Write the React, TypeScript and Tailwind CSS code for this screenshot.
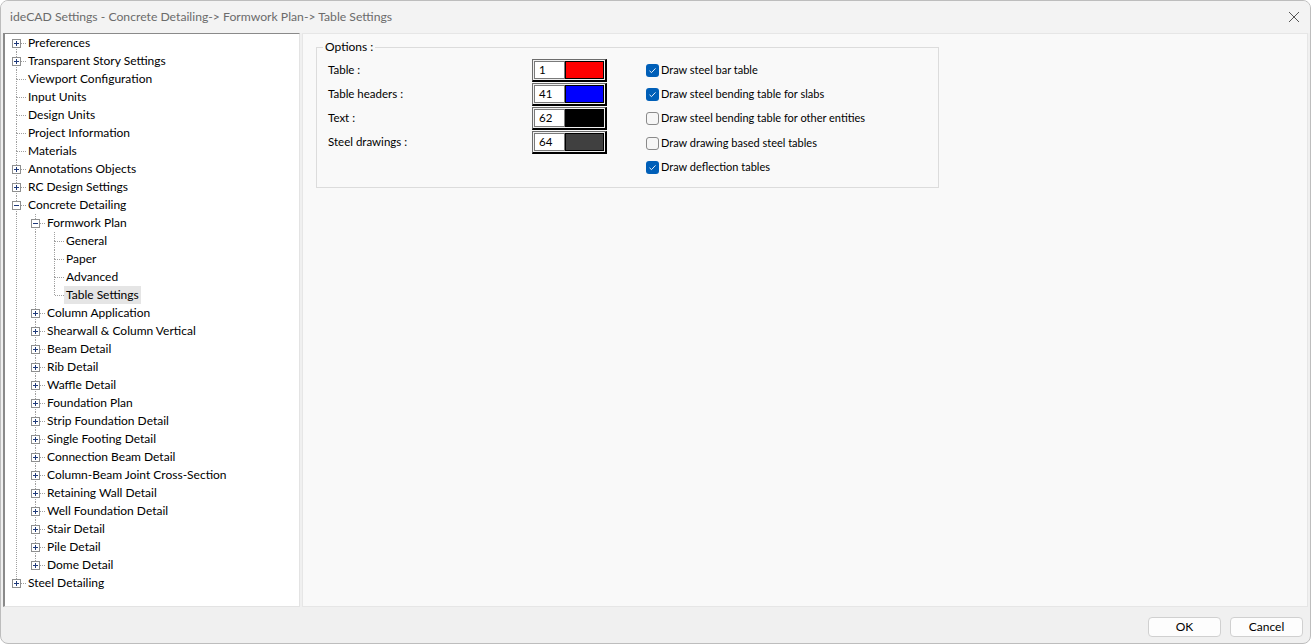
import React from "react";

type Node = { label: string; open?: boolean; selected?: boolean; kids?: Node[]; leaf?: boolean };

const concrete: Node[] = [
  {
    label: "Formwork Plan",
    open: true,
    kids: [
      { label: "General", leaf: true },
      { label: "Paper", leaf: true },
      { label: "Advanced", leaf: true },
      { label: "Table Settings", leaf: true, selected: true },
    ],
  },
  ...[
    "Column Application",
    "Shearwall & Column Vertical",
    "Beam Detail",
    "Rib Detail",
    "Waffle Detail",
    "Foundation Plan",
    "Strip Foundation Detail",
    "Single Footing Detail",
    "Connection Beam Detail",
    "Column-Beam Joint Cross-Section",
    "Retaining Wall Detail",
    "Well Foundation Detail",
    "Stair Detail",
    "Pile Detail",
    "Dome Detail",
  ].map((label) => ({ label })),
];

const tree: Node[] = [
  { label: "Preferences" },
  { label: "Transparent Story Settings" },
  { label: "Viewport Configuration", leaf: true },
  { label: "Input Units", leaf: true },
  { label: "Design Units", leaf: true },
  { label: "Project Information", leaf: true },
  { label: "Materials", leaf: true },
  { label: "Annotations Objects" },
  { label: "RC Design Settings" },
  { label: "Concrete Detailing", open: true, kids: concrete },
  { label: "Steel Detailing" },
];

const DOT = "#a0a0a0";

function Guide({ on }: { on: boolean }) {
  return (
    <svg width="19" height="18" className="shrink-0">
      {on && <line x1="11.5" y1="0" x2="11.5" y2="18" stroke={DOT} strokeDasharray="1 1" />}
    </svg>
  );
}

function Connector({ first, last, node }: { first: boolean; last: boolean; node: Node }) {
  return (
    <svg width="21" height="18" className="shrink-0">
      {!first && <line x1="11.5" y1="0" x2="11.5" y2="9" stroke={DOT} strokeDasharray="1 1" />}
      {!last && <line x1="11.5" y1="9" x2="11.5" y2="18" stroke={DOT} strokeDasharray="1 1" />}
      <line x1="12" y1="9.5" x2="21" y2="9.5" stroke={DOT} strokeDasharray="1 1" />
      {!node.leaf && (
        <g>
          <rect x="7.5" y="5.5" width="8" height="8" fill="#fff" stroke="#8e8f8f" />
          <line x1="9" y1="9.5" x2="14" y2="9.5" stroke="#1f3a7a" />
          {!node.open && <line x1="11.5" y1="7" x2="11.5" y2="12" stroke="#1f3a7a" />}
        </g>
      )}
    </svg>
  );
}

function rows(nodes: Node[], guides: boolean[], root: boolean): React.ReactNode[] {
  const out: React.ReactNode[] = [];
  nodes.forEach((n, i) => {
    const last = i === nodes.length - 1;
    out.push(
      <div key={guides.length + n.label} className="flex h-[18px] items-center">
        {guides.map((g, j) => (
          <Guide key={j} on={g} />
        ))}
        <Connector first={root && i === 0} last={last} node={n} />
        <span className={`px-[2px] leading-[18px] whitespace-nowrap ${n.selected ? "bg-[#e5e5e5]" : ""}`}>{n.label}</span>
      </div>
    );
    if (n.open && n.kids) out.push(...rows(n.kids, [...guides, !last], false));
  });
  return out;
}

function ColorBox({ num, color }: { num: string; color: string }) {
  return (
    <div className="flex h-[23px] w-[75px] border-t border-l border-[#6d6d6d] border-r-2 border-b-2 border-r-black border-b-black bg-[#f0f0f0] p-[1px]">
      <div className="flex h-[18px] w-[31px] items-center border border-[#7a7a7a] bg-white pl-[4px] text-[11.5px]">{num}</div>
      <div className="h-[18px] flex-1 border border-black" style={{ background: color }} />
    </div>
  );
}

function Check({ on, label }: { on: boolean; label: string }) {
  return (
    <div className="flex h-[24.3px] items-center">
      {on ? (
        <span className="flex h-[13px] w-[13px] items-center justify-center rounded-[3px] bg-[#005fb8]">
          <svg width="9" height="9" viewBox="0 0 9 9">
            <path d="M1.5 4.8 L3.5 6.6 L7.5 2.4" fill="none" stroke="#fff" strokeWidth="0.9" />
          </svg>
        </span>
      ) : (
        <span className="h-[13px] w-[13px] rounded-[3px] border border-[#8a8a8a] bg-[#f6f6f6]" />
      )}
      <span className="ml-[2px] text-[11px]">{label}</span>
    </div>
  );
}

export default function App() {
  const fields = [
    { label: "Table :", num: "1", color: "#ff0000" },
    { label: "Table headers :", num: "41", color: "#0000ff" },
    { label: "Text :", num: "62", color: "#000000" },
    { label: "Steel drawings :", num: "64", color: "#404040" },
  ];
  const checks = [
    { label: "Draw steel bar table", on: true },
    { label: "Draw steel bending table for slabs", on: true },
    { label: "Draw steel bending table for other entities", on: false },
    { label: "Draw drawing based steel tables", on: false },
    { label: "Draw deflection tables", on: true },
  ];

  return (
    <div
      className="flex h-[644px] w-[1311px] flex-col overflow-hidden rounded-[8px] border border-[#bdbdbd] bg-[#f0f0f0] text-[12px] text-black"
      style={{ fontFamily: "Lato, 'Noto Sans', sans-serif" }}
    >
      {/* title bar */}
      <div className="flex h-[32px] shrink-0 items-center justify-between bg-[#f3f3f3] pl-[9px] pr-[8px]">
        <span className="text-[12.2px] text-[#6b6b6b]">ideCAD Settings - Concrete Detailing-&gt; Formwork Plan-&gt; Table Settings</span>
        <svg width="12" height="12" viewBox="0 0 12 12" className="mr-[2px]">
          <path d="M1 1 L11 11 M11 1 L1 11" stroke="#555" strokeWidth="1" />
        </svg>
      </div>

      <div className="flex min-h-0 flex-1 gap-[2px] pl-[2px] pr-[2px]">
        {/* tree */}
        <div className="w-[297px] border-t border-l-2 border-t-[#8a8a8a] border-l-[#8a8a8a] border-r border-b border-r-[#e3e3e3] border-b-[#e3e3e3] bg-white">
          <div>{rows(tree, [], true)}</div>
        </div>

        {/* options panel */}
        <div className="flex-1 border border-[#e6e6e6] bg-[#f9f9f9] pl-[13px] pt-[5px]">
          <fieldset className="h-[149px] w-[623px] border border-[#dcdcdc] pl-[11px] pt-[3px]">
            <legend className="ml-[-5px] px-[2px] leading-[16px]">Options :</legend>
            <div className="flex">
              <div className="w-[204px] text-[11.5px]">
                {fields.map((f) => (
                  <div key={f.label} className="flex h-[24px] items-center">
                    {f.label}
                  </div>
                ))}
              </div>
              <div>
                {fields.map((f) => (
                  <div key={f.label} className="flex h-[24px] items-center">
                    <ColorBox num={f.num} color={f.color} />
                  </div>
                ))}
              </div>
              <div className="ml-[39px]">
                {checks.map((c) => (
                  <Check key={c.label} on={c.on} label={c.label} />
                ))}
              </div>
            </div>
          </fieldset>
        </div>
      </div>

      {/* bottom bar */}
      <div className="flex h-[36px] shrink-0 items-start justify-end gap-[9px] pr-[7px] pt-[10px]">
        <button className="h-[20px] w-[73px] rounded-[4px] border border-[#d0d0d0] bg-[#fdfdfd] text-[12px]">OK</button>
        <button className="h-[20px] w-[73px] rounded-[4px] border border-[#d0d0d0] bg-[#fdfdfd] text-[12px]">Cancel</button>
      </div>
    </div>
  );
}
